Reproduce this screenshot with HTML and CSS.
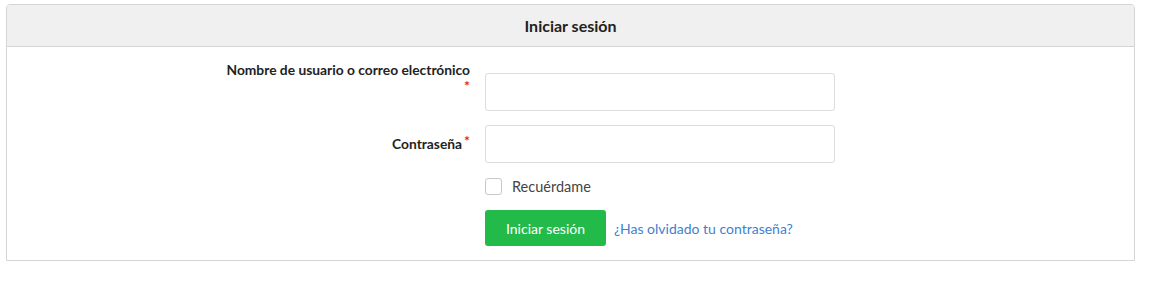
FILE: index.html
```html
<!DOCTYPE html>
<html lang="es">
<head>
<meta charset="utf-8">
<title>Iniciar sesión</title>
<link rel="stylesheet" href="styles.css">
</head>
<body>
<div class="panel">
  <div class="panel-heading">Iniciar sesión</div>
  <form class="panel-body">
    <div class="row row-first">
      <label class="label label-wrap" for="user">Nombre de usuario o correo electrónico <span class="req">*</span></label>
      <div class="field"><input class="input" id="user" type="text"></div>
    </div>
    <div class="row row-pass">
      <label class="label" for="pass">Contraseña<span class="req">*</span></label>
      <div class="field"><input class="input" id="pass" type="password"></div>
    </div>
    <div class="row row-check">
      <div></div>
      <label class="check"><span class="box"></span><span class="check-text">Recuérdame</span></label>
    </div>
    <div class="row row-actions">
      <div></div>
      <div class="actions">
        <button type="button" class="btn">Iniciar sesión</button>
        <a class="link" href="#">¿Has olvidado tu contraseña?</a>
      </div>
    </div>
  </form>
</div>
</body>
</html>
```
FILE: styles.css
```css
html, body { margin: 0; padding: 0; background: #fff; }
body { font-family: Lato, "Open Sans", sans-serif; font-size: 14px; color: #333; }

.panel {
  box-sizing: border-box;
  width: 1129px;
  margin: 4px 0 0 6px;
  border: 1px solid #d5d5d5;
  border-radius: 4px 4px 0 0;
}
.panel-heading {
  height: 41px;
  display: flex;
  align-items: center;
  justify-content: center;
  background: #f0f0f0;
  border-bottom: 1px solid #d5d5d5;
  border-radius: 3px 3px 0 0;
  font-weight: bold;
  font-size: 16px;
  color: #222;
}
.panel-body {
  margin: 0;
  padding: 15px 0 14px;
  display: flex;
  flex-direction: column;
}
.row {
  display: grid;
  grid-template-columns: 463px 350px;
  column-gap: 15px;
  align-items: center;
}
.row-first { align-items: start; }
.row-first .field { padding-top: 11px; }
.row-pass { margin-top: 14px; }
.row-check { margin-top: 15px; height: 17px; }
.row-actions { margin-top: 15px; }

.label {
  justify-self: end;
  text-align: right;
  font-weight: bold;
  font-size: 13.8px;
  line-height: 16px;
  color: #222;
  padding-bottom: 3px;
}
.label-wrap { max-width: 249px; }
.req {
  color: #e4262a;
  font-size: 14px;
  font-weight: bold;
  vertical-align: 3px;
  margin-left: 2px;
}
.field { display: flex; }
.input {
  box-sizing: border-box;
  width: 350px;
  height: 38px;
  margin: 0;
  border: 1px solid #dcdcdc;
  border-radius: 3px;
  padding: 6px 10px;
  font: inherit;
  background: #fff;
}
.check {
  display: flex;
  align-items: center;
  gap: 10px;
}
.box {
  box-sizing: border-box;
  width: 17px;
  height: 17px;
  border: 1px solid #c8c8c8;
  border-radius: 3px;
  background: #fff;
}
.check-text { font-size: 14.5px; color: #444; }
.actions {
  display: flex;
  align-items: center;
  gap: 8px;
}
.btn {
  box-sizing: border-box;
  width: 121px;
  height: 36px;
  border: 0;
  border-radius: 3px;
  background: #22bb4a;
  color: #fff;
  font: inherit;
  font-size: 14px;
  padding: 0;
}
.link {
  color: #3f7fcf;
  text-decoration: none;
  font-size: 14px;
}
```
